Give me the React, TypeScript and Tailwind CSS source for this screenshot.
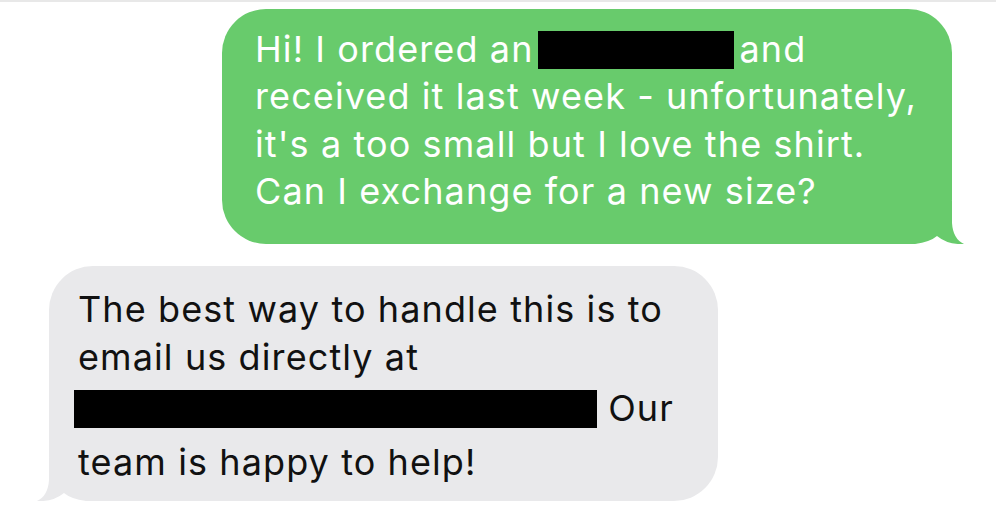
const font = { fontFamily: "Inter, 'Liberation Sans', sans-serif" };

function Tail({ color, side }: { color: string; side: "left" | "right" }) {
  return (
    <svg
      width="66"
      height="43"
      viewBox="0 0 66 43"
      className={
        side === "right"
          ? "absolute bottom-0 right-[-14px]"
          : "absolute bottom-0 left-[-14px] -scale-x-100"
      }
    >
      <path
        d="M52 0 L52 22 Q53 38 64 43 Q48 44 37 35 Q30 41 15 43 L0 43 L0 0 Z"
        fill={color}
      />
    </svg>
  );
}

function Redacted({ width, className = "" }: { width: number; className?: string }) {
  return (
    <span
      className={"inline-block h-[38px] bg-black align-[-7px] " + className}
      style={{ width }}
    />
  );
}

export default function App() {
  return (
    <div
      className="w-[996px] h-[516px] bg-white border-t-2 border-[#e8e8e8] overflow-hidden"
      style={font}
    >
      <div className="flex justify-end pr-[44px] pt-[7px]">
        <div className="relative w-[730px] rounded-[44px] bg-[#68cb6c] pl-[33px] pt-[17px] pb-[29px] text-white text-[36px] tracking-[1.1px] leading-[47.3px] whitespace-nowrap">
          <Tail color="#68cb6c" side="right" />
          <div className="relative">
            <div>
              Hi! I ordered an
              <Redacted width={196} className="ml-[4px] mr-[6px]" />
              and
            </div>
            <div>received it last week - unfortunately,</div>
            <div>it's a too small but I love the shirt.</div>
            <div>Can I exchange for a new size?</div>
          </div>
        </div>
      </div>

      <div className="pl-[49px] pt-[22px]">
        <div className="relative w-[669px] rounded-[44px] bg-[#e9e9eb] pl-[29px] pt-[19px] pb-[15px] text-[#111] text-[36px] tracking-[1.1px] leading-[48px] whitespace-nowrap">
          <Tail color="#e9e9eb" side="left" />
          <div className="relative">
            <div>The best way to handle this is to</div>
            <div>email us directly at</div>
            <div className="mt-[3px] -ml-[4px]">
              <Redacted width={523} /> Our
            </div>
            <div className="mt-[6px]">team is happy to help!</div>
          </div>
        </div>
      </div>
    </div>
  );
}
